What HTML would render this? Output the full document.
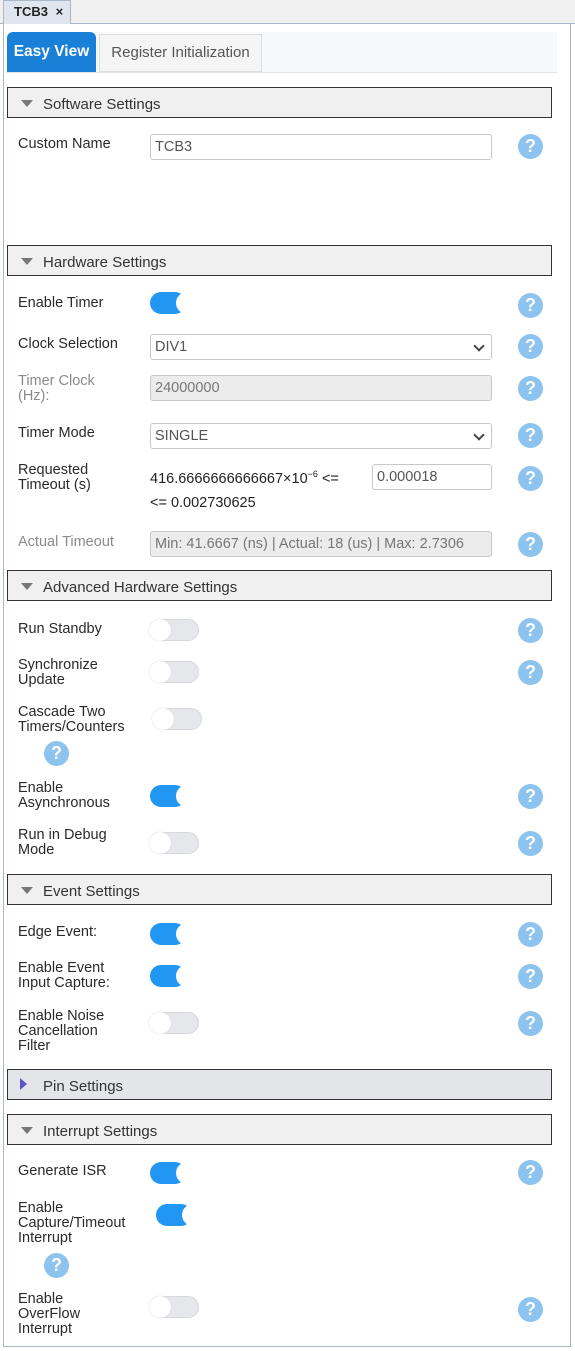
<!DOCTYPE html>
<html><head><meta charset="utf-8"><style>
*{box-sizing:border-box;margin:0;padding:0}
body{width:575px;height:1351px;background:#fff;position:relative;overflow:hidden;font-family:"Liberation Sans",sans-serif;font-size:14.5px;color:#222}
.a{position:absolute}
.lbl{position:absolute;left:18px;line-height:15px;color:#2a2a2a;margin-top:1px}
.dis{color:#8a8a8a}
.hdr{position:absolute;left:7px;width:545px;height:31px;background:#f0f0f0;border:1.5px solid #333;font-size:15px;line-height:33px;padding-left:35px;color:#333}
.hdr:before{content:"";position:absolute;left:13px;top:12px;border-left:6px solid transparent;border-right:6px solid transparent;border-top:7px solid #777}
.hdr.np:before{display:none}
.inp{position:absolute;left:150px;width:342px;height:26px;border:1px solid #c8c8c8;border-radius:3px;background:#fff;font-size:14.5px;line-height:24px;padding-left:4px;color:#555;white-space:nowrap;overflow:hidden}
.inp.g{background:#ececec;color:#777}
.sel:after{content:"";position:absolute;right:8px;top:7px;width:6px;height:6px;border-right:2px solid #444;border-bottom:2px solid #444;transform:rotate(45deg)}
.q{position:absolute;width:25px;height:25px;border-radius:50%;background:#8cc3ef;color:#fff;font-weight:bold;font-size:18px;line-height:25px;text-align:center}
.off{position:absolute;width:50px;height:22px;border-radius:11px;background:#e5e7ea;border:1px solid #d6d8db}
.off:before{content:"";position:absolute;left:-1px;top:-1px;width:22px;height:22px;border-radius:50%;background:#fff;box-shadow:0 0 1px #bbb}
.on{position:absolute;width:50px;height:22px}
.on:before{content:"";position:absolute;left:0;top:0;width:36px;height:22px;border-radius:11px;background:#2196f3}
.on:after{content:"";position:absolute;left:26px;top:0;width:22px;height:22px;border-radius:50%;background:#fff}
</style></head><body>
<div class="a" style="left:0;top:0;width:575px;height:24px;background:#f0f0f0;border-bottom:1px solid #a9b8c9"></div>
<div class="a" style="left:3px;top:0;width:68px;height:24px;background:#dfe6ef;border:1px solid #a9b8c9;border-bottom:none;font-weight:bold;font-size:13px;line-height:22px;padding-left:10px">TCB3 <span style="margin-left:4px">×</span></div>
<div class="a" style="left:3px;top:24px;width:568px;height:1323px;border:1px solid #a9b8c9;border-top:none;background:#fff"></div>
<div class="a" style="left:6px;top:32px;width:551px;height:41px;background:#f7f8fa;border-bottom:1px solid #e4e6e8"></div>
<div class="a" style="left:7px;top:32px;width:89px;height:40px;background:#1a7fd6;border-radius:6px 6px 0 0;color:#fff;font-weight:bold;font-size:15.5px;line-height:39px;text-align:center">Easy View</div>
<div class="a" style="left:99px;top:34px;width:163px;height:38px;background:#f5f5f5;border:1px solid #ddd;color:#555;font-size:15px;line-height:36px;text-align:center">Register Initialization</div>

<div class="hdr" style="top:87px">Software Settings</div>
<div class="lbl" style="top:136px">Custom Name</div>
<div class="inp" style="top:134px">TCB3</div>
<div class="q" style="left:518px;top:134px">?</div>

<div class="hdr" style="top:245px">Hardware Settings</div>
<div class="lbl" style="top:295px">Enable Timer</div>
<div class="on" style="left:150px;top:292px"></div>
<div class="q" style="left:518px;top:293px">?</div>
<div class="lbl" style="top:336px">Clock Selection</div>
<div class="inp sel" style="top:334px">DIV1</div>
<div class="q" style="left:518px;top:334px">?</div>
<div class="lbl dis" style="top:373px">Timer Clock<br>(Hz):</div>
<div class="inp g" style="top:375px">24000000</div>
<div class="q" style="left:518px;top:376px">?</div>
<div class="lbl" style="top:425px">Timer Mode</div>
<div class="inp sel" style="top:423px">SINGLE</div>
<div class="q" style="left:518px;top:423px">?</div>
<div class="lbl" style="top:462px">Requested<br>Timeout (s)</div>
<div class="a" style="left:150px;top:469px;font-size:14.5px">416.6666666666667×10<sup style="font-size:9px">−6</sup> &lt;=</div>
<div class="inp" style="left:372px;width:120px;top:464px">0.000018</div>
<div class="a" style="left:150px;top:495px">&lt;= 0.002730625</div>
<div class="q" style="left:518px;top:466px">?</div>
<div class="lbl dis" style="top:534px">Actual Timeout</div>
<div class="inp g" style="top:531px">Min: 41.6667 (ns) | Actual: 18 (us) | Max: 2.7306</div>
<div class="q" style="left:518px;top:532px">?</div>

<div class="hdr" style="top:570px">Advanced Hardware Settings</div>
<div class="lbl" style="top:621px">Run Standby</div>
<div class="off" style="left:149px;top:619px"></div>
<div class="q" style="left:518px;top:618px">?</div>
<div class="lbl" style="top:657px">Synchronize<br>Update</div>
<div class="off" style="left:149px;top:661px"></div>
<div class="q" style="left:518px;top:660px">?</div>
<div class="lbl" style="top:704px">Cascade Two<br>Timers/Counters</div>
<div class="off" style="left:152px;top:708px"></div>
<div class="q" style="left:44px;top:741px">?</div>
<div class="lbl" style="top:780px">Enable<br>Asynchronous</div>
<div class="on" style="left:150px;top:785px"></div>
<div class="q" style="left:518px;top:784px">?</div>
<div class="lbl" style="top:827px">Run in Debug<br>Mode</div>
<div class="off" style="left:149px;top:832px"></div>
<div class="q" style="left:518px;top:831px">?</div>

<div class="hdr" style="top:874px">Event Settings</div>
<div class="lbl" style="top:924px">Edge Event:</div>
<div class="on" style="left:150px;top:923px"></div>
<div class="q" style="left:518px;top:922px">?</div>
<div class="lbl" style="top:960px">Enable Event<br>Input Capture:</div>
<div class="on" style="left:150px;top:965px"></div>
<div class="q" style="left:518px;top:964px">?</div>
<div class="lbl" style="top:1008px">Enable Noise<br>Cancellation<br>Filter</div>
<div class="off" style="left:149px;top:1012px"></div>
<div class="q" style="left:518px;top:1011px">?</div>

<div class="hdr np" style="top:1069px;background:#e3e5e8">Pin Settings</div>
<div class="a" style="left:20px;top:1078px;border-top:6px solid transparent;border-bottom:6px solid transparent;border-left:7px solid #5a55c8"></div>
<div class="hdr" style="top:1114px">Interrupt Settings</div>
<div class="lbl" style="top:1163px">Generate ISR</div>
<div class="on" style="left:150px;top:1162px"></div>
<div class="q" style="left:518px;top:1160px">?</div>
<div class="lbl" style="top:1200px">Enable<br>Capture/Timeout<br>Interrupt</div>
<div class="on" style="left:156px;top:1204px"></div>
<div class="q" style="left:44px;top:1253px">?</div>
<div class="lbl" style="top:1291px">Enable<br>OverFlow<br>Interrupt</div>
<div class="off" style="left:149px;top:1296px"></div>
<div class="q" style="left:518px;top:1297px">?</div>
</body></html>
